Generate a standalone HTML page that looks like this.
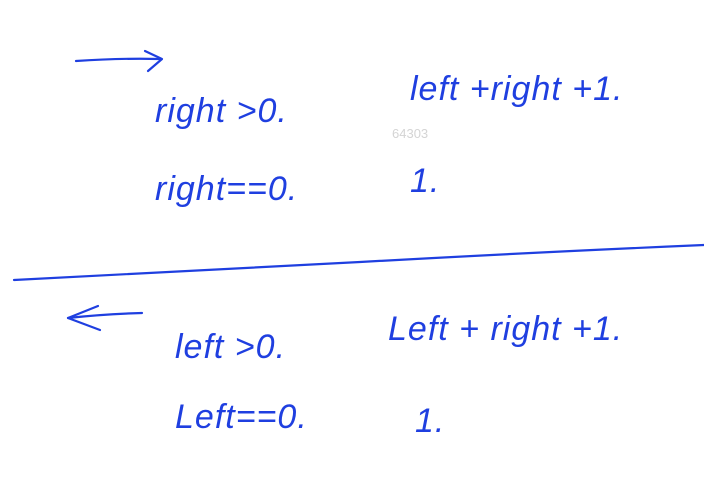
<!DOCTYPE html>
<html><head><meta charset="utf-8"><style>
html,body{margin:0;padding:0;background:#fff;width:704px;height:497px;overflow:hidden}
svg{display:block}
.h{font-family:"Liberation Sans",sans-serif;font-style:italic;fill:#1f3fe0;font-size:34px;letter-spacing:1px}
</style></head><body>
<svg width="704" height="497" viewBox="0 0 704 497">
<g fill="none" stroke="#1f3fe0" stroke-width="2.2" stroke-linecap="round" stroke-linejoin="round">
<path d="M76 61 Q120 58 160 59"/>
<path d="M145 51 L162 59 L148 71"/>
<path d="M14 280 Q200 270 360 262 Q540 252 704 245"/>
<path d="M68 318 Q105 314 142 313"/>
<path d="M98 306 L68 318 L100 330"/>
</g>
<text class="h" x="155" y="122">right &gt;0.</text>
<text class="h" x="410" y="100">left +right +1.</text>
<text x="392" y="138" font-family="Liberation Sans,sans-serif" font-size="13" fill="#d4d4d4">64303</text>
<text class="h" x="155" y="200">right==0.</text>
<text class="h" x="410" y="192">1.</text>
<text class="h" x="175" y="358">left &gt;0.</text>
<text class="h" x="388" y="340">Left + right +1.</text>
<text class="h" x="175" y="428">Left==0.</text>
<text class="h" x="415" y="432">1.</text>
</svg>
</body></html>
